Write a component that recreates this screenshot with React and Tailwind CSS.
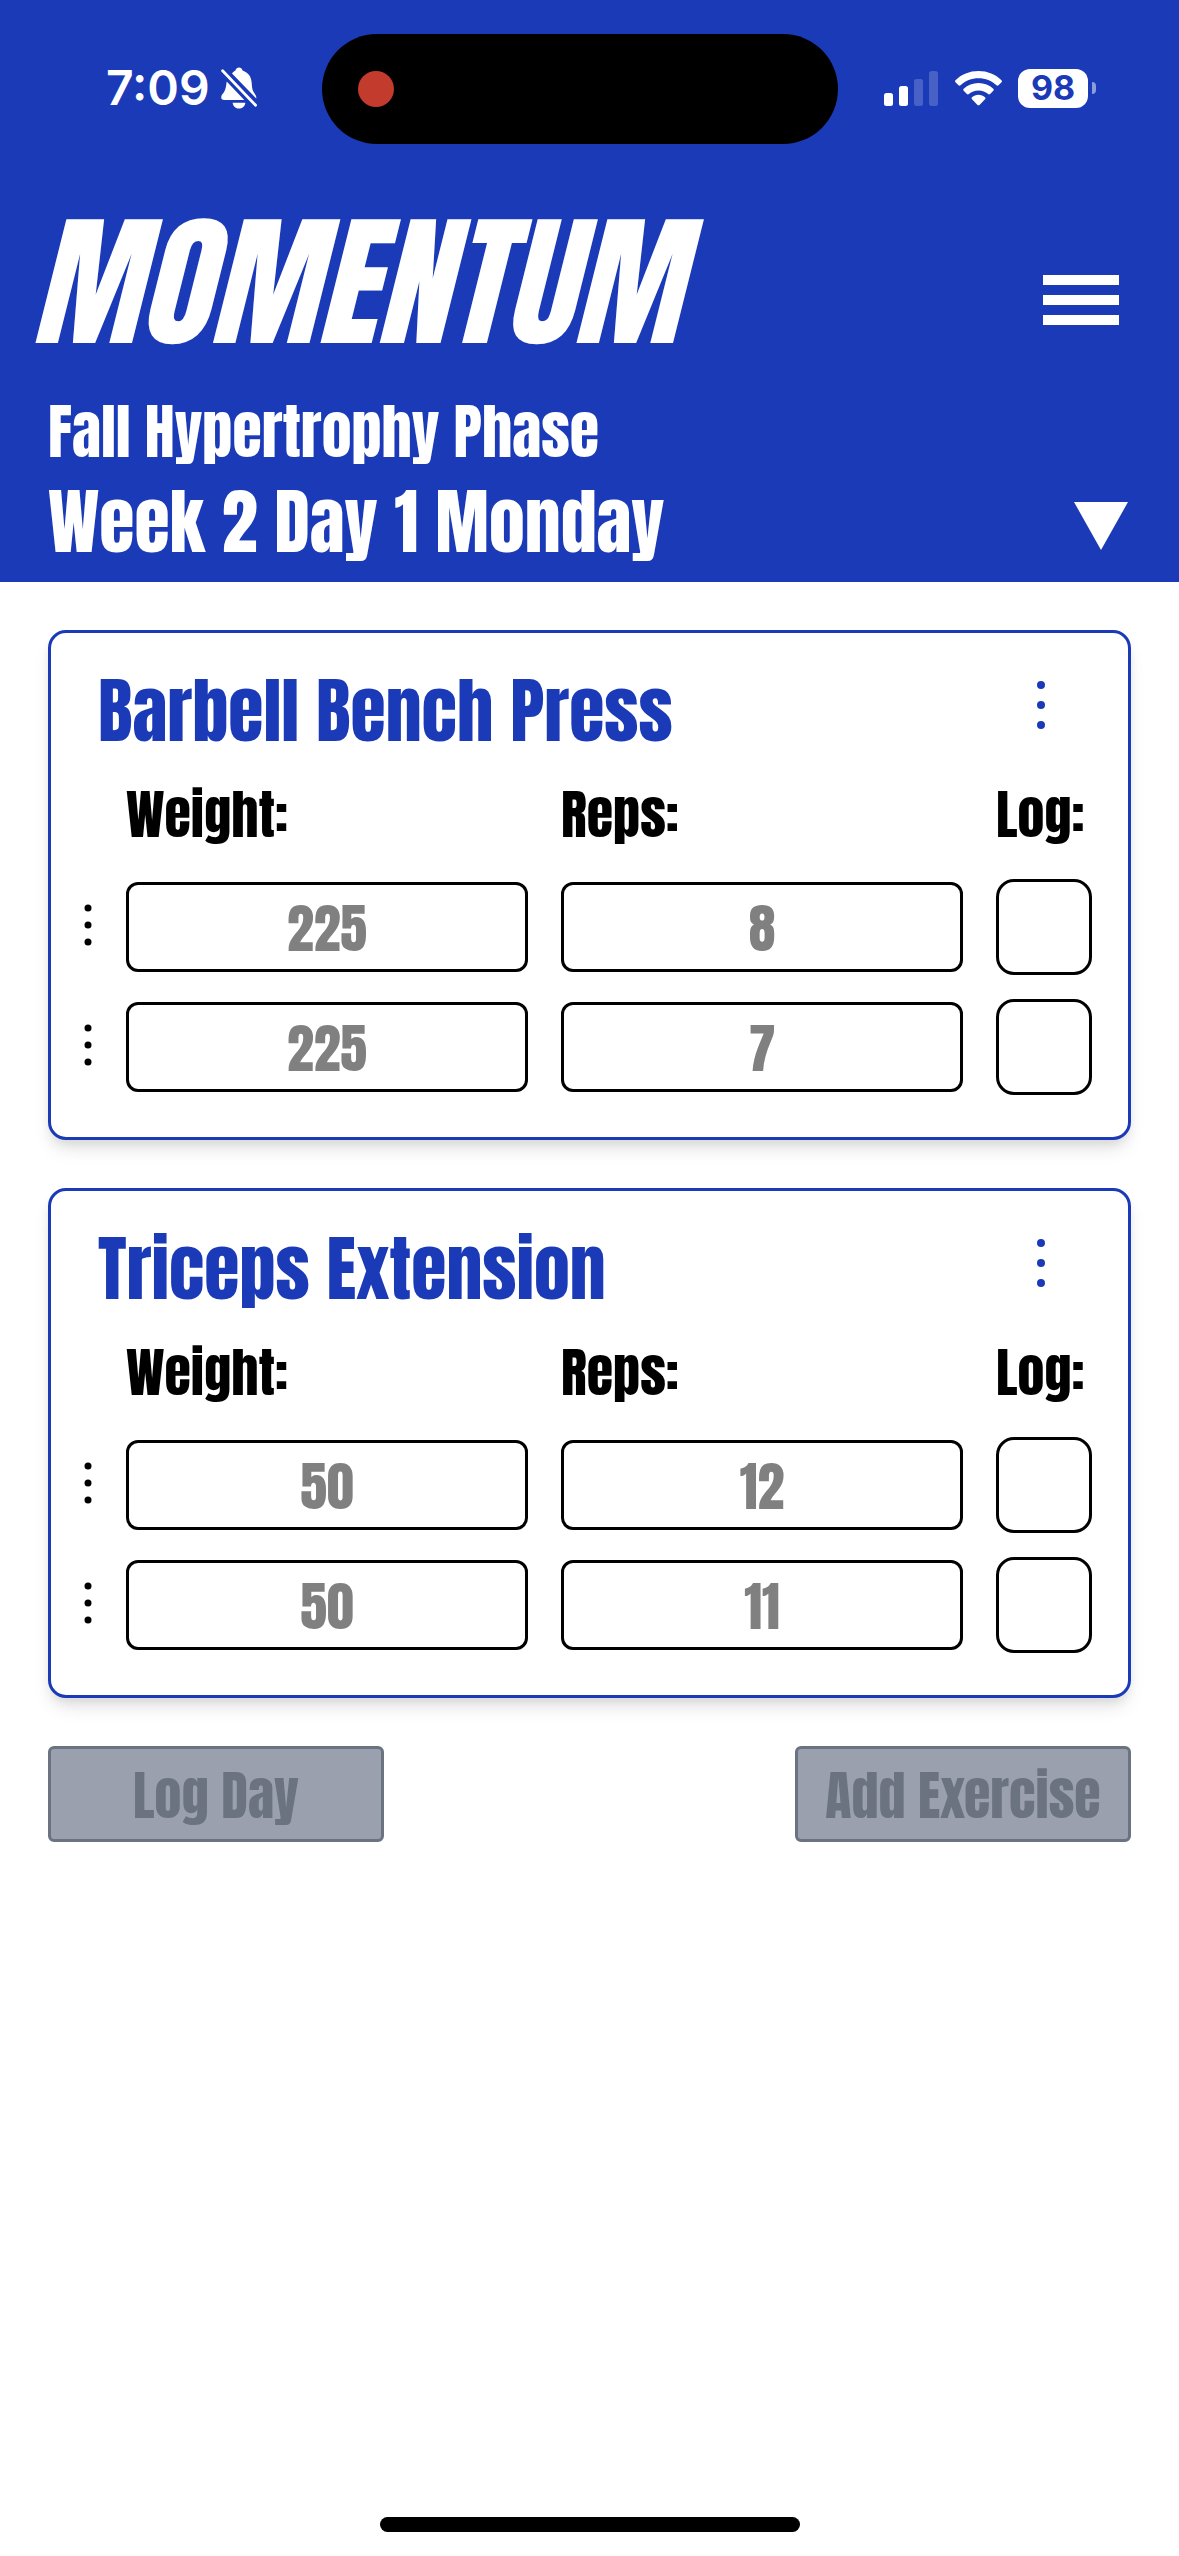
const exercises = [
  {
    name: "Barbell Bench Press",
    sets: [
      { weight: "225", reps: "8" },
      { weight: "225", reps: "7" },
    ],
  },
  {
    name: "Triceps Extension",
    sets: [
      { weight: "50", reps: "12" },
      { weight: "50", reps: "11" },
    ],
  },
];

function BellOffIcon() {
  return (
    <svg viewBox="0 0 38 42" className="h-[42px] w-[38px]" fill="currentColor" aria-hidden="true">
      <path d="M12 6.5C13 5 14.3 4 15.4 3.4 16 1.500 17.300 .4 19 .4s3 1.100 3.600 3C28.500 5.500 31 9.500 31.600 15c.4 4 .4 7.500 2 10 1.200 2 2.700 3.200 2.700 5.300v1.200z" />
      <path d="M6.700 14.500 24.300 33H4.200C2.300 33 1.200 32 1.200 30.200c0-2 1.700-3.400 3-5.500 1.700-2.800 1.900-6 2.500-10.200z" />
      <path d="M12.600 35.800h12.800c-.5 3.600-3.200 5.800-6.400 5.800s-5.900-2.200-6.400-5.800z" />
      <path d="M2.600 3.700 35.600 38.300" stroke="currentColor" strokeWidth="2.800" strokeLinecap="round" fill="none" />
    </svg>
  );
}

function SignalIcon() {
  return (
    <svg viewBox="0 0 55 35" className="h-[35px] w-[55px]" fill="currentColor" aria-hidden="true">
      <rect x="0" y="22" width="9" height="13" rx="2.500" />
      <rect x="15" y="15" width="9" height="20" rx="2.500" />
      <rect x="30" y="8" width="9" height="27" rx="2.500" opacity=".2" />
      <rect x="45" y="0" width="9" height="35" rx="2.500" opacity=".2" />
    </svg>
  );
}

function WifiIcon() {
  return (
    <svg viewBox="0 0 47 35" className="h-[35px] w-[47px]" fill="currentColor" aria-hidden="true">
      <path d="M23.500 0C32.500 0 40.700 3.400 46.500 9.200c.6.6.6 1.500 0 2.100l-3 3c-.5.500-1.400.5-2 0C36.700 9.600 30.400 7.200 23.500 7.200S10.300 9.600 5.500 14.300c-.6.5-1.500.5-2 0l-3-3c-.6-.6-.6-1.500 0-2.100C6.300 3.400 14.500 0 23.500 0z" />
      <path d="M23.500 12c5.700 0 10.900 2.200 14.800 5.700.6.6.6 1.500 0 2.100l-3.200 3.200c-.5.500-1.400.5-2 0-2.600-2.200-5.900-3.600-9.600-3.600s-7 1.400-9.600 3.600c-.6.5-1.500.5-2 0l-3.200-3.200c-.6-.6-.6-1.500 0-2.100C12.600 14.200 17.800 12 23.500 12z" />
      <path d="M23.500 23.800c2.500 0 4.700.9 6.500 2.400.6.5.6 1.400 0 2l-5.500 5.700c-.6.600-1.400.6-2 0L17 28.200c-.6-.6-.6-1.500 0-2 1.800-1.500 4-2.400 6.500-2.400z" />
    </svg>
  );
}

function StatusBar() {
  return (
    <div className="grid grid-cols-[322fr_516px_341fr] items-center pt-[34px]">
      <div className="flex items-center gap-[10px] pb-[2px] pl-[106px]">
        <span className="text-[48px] leading-none font-semibold">7:09</span>
        <BellOffIcon />
      </div>
      <div className="flex h-[110px] items-center rounded-full bg-black pl-9">
        <span className="size-9 rounded-full bg-[#c23b2d]" />
      </div>
      <div className="flex items-center justify-end gap-4 pr-[83px] pb-[2px]">
        <SignalIcon />
        <WifiIcon />
        <div className="flex items-center gap-1">
          <span className="flex h-[39px] w-[70px] items-center justify-center rounded-xl bg-white text-[34px] leading-none font-bold text-[#1a3ab8]">
            98
          </span>
          <span className="h-3 w-1 rounded-r-full bg-white/50" />
        </div>
      </div>
    </div>
  );
}

function Dots({ className, gap, r }) {
  return (
    <svg viewBox="-5 -26 10 52" className={className} fill="currentColor" aria-hidden="true">
      <circle cy={-gap} r={r} />
      <circle r={r} />
      <circle cy={gap} r={r} />
    </svg>
  );
}

function Header() {
  return (
    <header className="bg-[#1a3ab8] text-white">
      <div className="font-['Inter',sans-serif]">
        <StatusBar />
      </div>
      <div className="flex items-center justify-between pt-[66px] pr-[60px] pl-[30px]">
        <h1 className="text-[144px] leading-none italic">MOMENTUM</h1>
        <button type="button" aria-label="Open menu" className="mt-9">
          <svg viewBox="0 0 76 50" className="h-[50px] w-[76px]" fill="currentColor" aria-hidden="true">
            <rect width="76" height="10" />
            <rect y="20" width="76" height="10" />
            <rect y="40" width="76" height="10" />
          </svg>
        </button>
      </div>
      <div className="flex items-end justify-between px-12 pt-[38px] pb-3">
        <div className="flex flex-col gap-[2px]">
          <p className="text-[60px] leading-[80px]">Fall Hypertrophy Phase</p>
          <h2 className="text-[72px] leading-[96px]">Week 2 Day 1 Monday</h2>
        </div>
        <button type="button" aria-label="Choose day" className="pb-5">
          <svg viewBox="0 0 60 48" className="h-12 w-[60px]" fill="currentColor" aria-hidden="true">
            <path d="M3 0h54L30 48z" />
          </svg>
        </button>
      </div>
    </header>
  );
}

const setGrid = "grid grid-cols-[35px_1fr_1fr_96px] gap-x-[33px] items-center";
const inputClass =
  "h-[90px] w-full min-w-0 rounded-xl border-[3px] border-black bg-white pt-[2px] text-center text-[54px] leading-none placeholder:text-[#808080] placeholder:opacity-100";

function ExerciseCard({ exercise }) {
  return (
    <section className="rounded-[18px] border-[3px] border-[#1a3ab8] bg-white pt-[30px] pr-9 pb-[42px] pl-[7px] shadow-[0_12px_18px_-3px_rgba(0,0,0,0.1),0_6px_12px_-4px_rgba(0,0,0,0.1)]">
      <div className="flex items-start justify-between pr-9 pl-10">
        <h3 className="text-[72px] leading-[96px] text-[#1a3ab8]">{exercise.name}</h3>
        <button type="button" aria-label={`${exercise.name} options`} className="mt-4 text-[#1a3ab8]">
          <Dots gap={20} r={4} className="h-[52px] w-[30px]" />
        </button>
      </div>
      <div className={`${setGrid} pt-[14px] text-[54px] leading-[82px] text-black`}>
        <span className="col-start-2">Weight:</span>
        <span>Reps:</span>
        <span>Log:</span>
      </div>
      <ul className="flex flex-col gap-6 pt-6">
        {exercise.sets.map((set, i) => (
          <li key={i} className={setGrid}>
            <button type="button" aria-label={`Set ${i + 1} options`} className="flex justify-end pb-1 text-black">
              <Dots gap={17} r={3.5} className="h-[52px] w-[10px]" />
            </button>
            <input type="text" inputMode="numeric" aria-label={`Set ${i + 1} weight`} placeholder={set.weight} className={inputClass} />
            <input type="text" inputMode="numeric" aria-label={`Set ${i + 1} reps`} placeholder={set.reps} className={inputClass} />
            <input
              type="checkbox"
              aria-label={`Log set ${i + 1}`}
              className="size-24 appearance-none rounded-[18px] border-[3px] border-black bg-white checked:bg-[#1a3ab8]"
            />
          </li>
        ))}
      </ul>
    </section>
  );
}

const actionClass =
  "flex h-24 w-[336px] items-center justify-center rounded-md border-[3px] border-[#6b7280] bg-[#9aa0ae] pt-[2px] text-[54px] leading-none text-[#6b7280]";

export default function App() {
  return (
    <div className="flex min-h-screen flex-col bg-white font-['Anton',sans-serif]">
      <Header />
      <main className="flex flex-1 flex-col gap-12 px-12 pt-12">
        {exercises.map((exercise) => (
          <ExerciseCard key={exercise.name} exercise={exercise} />
        ))}
        <div className="flex justify-between">
          <button type="button" disabled className={actionClass}>Log Day</button>
          <button type="button" disabled className={actionClass}>Add Exercise</button>
        </div>
      </main>
      <footer className="flex justify-center pb-6">
        <span className="h-[15px] w-[420px] rounded-full bg-black" />
      </footer>
    </div>
  );
}
